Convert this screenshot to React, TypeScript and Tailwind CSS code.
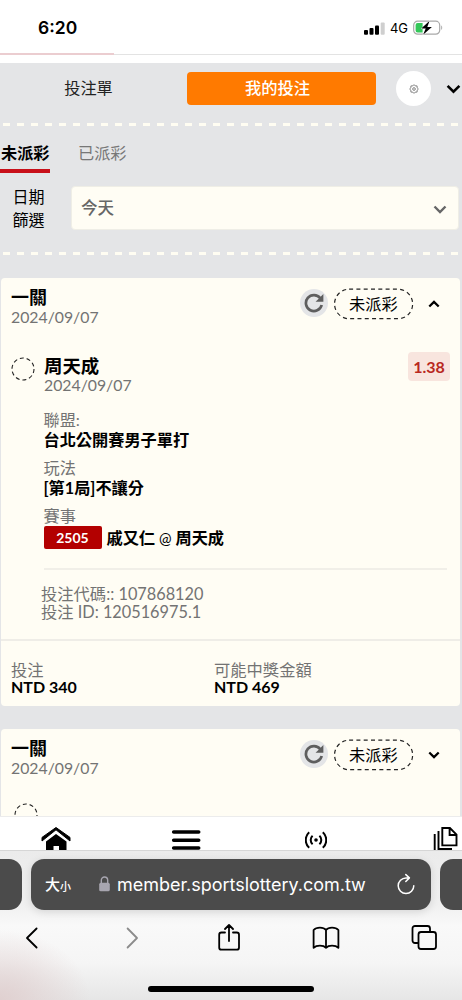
import type { ReactNode } from 'react';
import clsx from 'clsx';

const FIELDS = [
  { label: '聯盟:', value: '台北公開賽男子單打' },
  { label: '玩法', value: '[第1局]不讓分' },
];

function StatusBar() {
  return (
    <div className="h-[53px] shrink-0 flex items-start justify-between pl-[38px] pr-[19px] pt-[17px] font-['Inter','Liberation_Sans',sans-serif]">
      <span className="text-[17.5px] leading-[22px] font-semibold">6:20</span>
      <div className="flex items-center h-[22px] gap-[5px]">
        <svg width="21" height="13" viewBox="0 0 21 13">
          <rect x="0" y="8" width="4" height="4.7" rx="1" />
          <rect x="5.5" y="6" width="4" height="6.7" rx="1" />
          <rect x="11" y="3.5" width="4" height="9.2" rx="1" />
          <rect x="16.7" y="0.5" width="4" height="12.2" rx="1" fill="#cfcfcf" />
        </svg>
        <span className="text-[13px] leading-[22px]">4G</span>
        <svg width="30" height="16" viewBox="0 0 30 16">
          <rect x="0.7" y="1.2" width="26" height="13" rx="4" fill="#fff" stroke="#a9a9a9" strokeWidth="1.2" />
          <path d="M28.2 5.6c1.3.5 1.3 3.9 0 4.4z" fill="#a9a9a9" />
          <path d="M4.6 3h5v9.6h-5a2 2 0 0 1-2-2V5a2 2 0 0 1 2-2z" fill="#34c759" />
          <path d="M16.6.8 8.3 8.6h4.4l-2.6 6.2 8.8-7.9h-4.6z" stroke="#fff" strokeWidth="1" paintOrder="stroke" />
        </svg>
      </div>
    </div>
  );
}

function Dashes() {
  return (
    <div className="h-[2.5px] ml-[3px] mr-[4px] bg-[repeating-linear-gradient(90deg,#fffdf2_0_7px,transparent_7px_14px)]" />
  );
}

function Chevron({ className, up, width = 2.4 }: { className?: string; up?: boolean; width?: number }) {
  return (
    <svg className={className} viewBox="0 0 14 9" fill="none" stroke="currentColor" strokeWidth={width}>
      <path d={up ? 'M1.5 7.5 7 2l5.5 5.5' : 'M1.5 1.5 7 7l5.5-5.5'} />
    </svg>
  );
}

/* Ticket heading: name and date on the left, refresh / status / toggle on the right */
function TicketHead({ open }: { open?: boolean }) {
  return (
    <div className="flex pl-[10px] pr-[20px] pt-[10px]">
      <div className="flex-1">
        <p className="text-[18px] leading-[19px] font-bold">一關</p>
        <p className="text-[15.8px] leading-[19px] h-[20px] text-[#737373]">2024/09/07</p>
      </div>
      <div className="flex items-center h-[32px]">
        <span className="size-[28px] -mt-[3px] rounded-full bg-[#e4e5e7] flex items-center justify-center">
          <svg width="20" height="20" viewBox="0 0 20 20" fill="none">
            <path d="M16.3 5.2A8 8 0 1 0 17.7 12" stroke="#5e5e5e" strokeWidth="2.7" />
            <path d="M19.4 1v7.8h-7.8z" fill="#5e5e5e" />
          </svg>
        </span>
        <svg className="ml-[6px] mr-[-1px]" width="80" height="32" viewBox="0 0 80 32">
          <rect x="0.6" y="1.2" width="78" height="29.5" rx="14.5" fill="none" stroke="#222" strokeWidth="1.2" strokeDasharray="4 3.3" />
          <text x="39.4" y="22" textAnchor="middle" fontSize="16.2">未派彩</text>
        </svg>
        <Chevron up={open} className="w-[12px] h-[8px] ml-[15px] -mt-[1px]" width={2.6} />
      </div>
    </div>
  );
}

function PendingDot({ className }: { className?: string }) {
  return (
    <svg className={clsx('size-[24px] shrink-0', className)} viewBox="0 0 24 24">
      <circle cx="12" cy="12" r="11" fill="none" stroke="#222" strokeWidth="1.1" strokeDasharray="4 2.9" />
    </svg>
  );
}

function Amount({ label, value, className }: { label: string; value: string; className?: string }) {
  return (
    <div className={className}>
      <p className="text-[16.3px] leading-[18px] text-[#737373]">{label}</p>
      <p className="text-[16px] leading-[16px] font-bold">{value}</p>
    </div>
  );
}

function OpenTicket() {
  return (
    <section className="h-[428px] ml-px mr-[2px] rounded-[4px] bg-[#fffdf4] flex flex-col">
      <TicketHead open />
      <div className="flex pl-[10px] pr-[10px] mt-[30px]">
        <PendingDot />
        <div className="ml-[9px] flex-1">
          <p className="text-[18.4px] leading-[19px] font-bold">周天成</p>
          <p className="text-[15.8px] leading-[18px] h-[20px] text-[#737373]">2024/09/07</p>
        </div>
        <span className="w-[42px] h-[29px] -mt-[5px] rounded-[4px] bg-[#f8e5de] text-[#b9291f] text-[16px] leading-[29px] font-bold text-center">
          1.38
        </span>
      </div>
      <div className="pl-[42.5px] mt-[14px]">
        {FIELDS.map((f) => (
          <div key={f.label} className="h-[48px] text-[16.2px]">
            <p className="leading-[20px] text-[#737373]">{f.label}</p>
            <p className="leading-[20px] font-bold">{f.value}</p>
          </div>
        ))}
        <p className="text-[16.2px] leading-[20px] text-[#737373]">賽事</p>
        <div className="flex items-center h-[23px]">
          <span className="w-[58px] h-[23px] rounded-[2px] bg-[#b30000] text-white text-[14px] leading-[23px] font-bold text-center">
            2505
          </span>
          <span className="ml-[5px] text-[16.2px] leading-[23px] font-bold">戚又仁 <span className="text-[15px] font-normal">@</span> 周天成</span>
        </div>
      </div>
      <div className="ml-[43px] mr-[13px] mt-[19px] h-[2px] bg-[#f1efe8]" />
      <div className="ml-[40px] mt-[15px] text-[16.3px] leading-[17.5px] text-[#737373]">
        <p>投注代碼:: 107868120</p>
        <p>投注 ID: 120516975.1</p>
      </div>
      <div className="mt-[19px] h-[2px] bg-[#efede7]" />
      <div className="flex pl-[10px] pt-[20px]">
        <Amount className="w-[203px]" label="投注" value="NTD 340" />
        <Amount label="可能中獎金額" value="NTD 469" />
      </div>
    </section>
  );
}

function SiteNav() {
  return (
    <nav className="h-[34px] shrink-0 bg-white border-t border-[#ececec] overflow-hidden">
      <div className="flex items-start pt-[10px]">
        <svg className="ml-[41px]" width="30" height="25" viewBox="0 0 30 25">
          <path d="M1 14 15 2.8 29 14v-3.6L15 .5 1 10.4z" stroke="#000" />
          <path d="M5 14.5 15 7l10.5 7.5V25H18v-6h-5.5v6H5z" />
        </svg>
        <svg className="ml-[100px] mt-[3px]" width="30" height="21" viewBox="0 0 30 21" stroke="#000" strokeWidth="3.6" strokeLinecap="round">
          <path d="M2.7 2h25M2.7 10.2h25M2.7 18h25" />
        </svg>
        <svg className="ml-[104px] mt-[4px]" width="22" height="18" viewBox="0 0 22 18" fill="none" stroke="#000" strokeWidth="2">
          <circle cx="11" cy="9" r="1.8" fill="#000" stroke="none" />
          <path d="M7.6 4.8a5.6 5.6 0 0 0 0 8.4M14.4 4.8a5.6 5.6 0 0 1 0 8.4M4.2 1.2a10.6 10.6 0 0 0 0 15.6M17.8 1.2a10.6 10.6 0 0 1 0 15.6" />
        </svg>
        <svg className="ml-[106px]" width="26" height="26" viewBox="0 0 26 26" fill="none" stroke="#000" strokeWidth="1.9">
          <path d="M9.3 1h7.6l6.6 6.6v10.8H9.3zM16.6 1.2v6.8h6.8M5.5 4v18h13.5M1.7 7V26" />
        </svg>
      </div>
    </nav>
  );
}

function ToolIcon({ children, className }: { children: ReactNode; className?: string }) {
  return (
    <svg
      className={clsx('size-[28px]', className)}
      viewBox="0 0 28 28"
      fill="none"
      stroke="currentColor"
      strokeWidth="1.8"
      strokeLinecap="round"
      strokeLinejoin="round"
    >
      {children}
    </svg>
  );
}

function BrowserBar() {
  return (
    <footer className="h-[150px] shrink-0 border-t border-[#d6d6d6] flex flex-col overflow-hidden bg-[radial-gradient(ellipse_90px_70px_at_0_100%,#e0d0d0,transparent),linear-gradient(#ebebeb_0%,#f0f0f0_36%,#f9f9f9_50%,#f5f5f5_75%,#e6e6e6_100%)]">
      <div className="flex mt-[8px] h-[51px] gap-[9px] font-['Inter','Noto_Sans_CJK_TC',sans-serif]">
        <div className="w-[22px] shrink-0 rounded-r-[13px] bg-[#4b4b4b]" />
        <div className="w-[400px] shrink-0 rounded-[13px] bg-[#4b4b4b] text-white flex items-center pl-[14px] pr-[16px] shadow-[0_2px_8px_rgba(0,0,0,0.12)]">
          <span className="text-[15px] leading-[20px] font-medium">大</span>
          <span className="text-[11px] leading-[14px] font-medium mt-[4px]">小</span>
          <svg className="ml-[28px] -mt-[2px]" width="11" height="16" viewBox="0 0 11 16">
            <path d="M2.3 8V4.2a3.2 3.2 0 0 1 6.4 0V8" fill="none" stroke="#a8a6b0" strokeWidth="1.4" />
            <rect x="0.2" y="6.7" width="10.6" height="8.6" rx="1.6" fill="#a8a6b0" />
          </svg>
          <span className="ml-[7px] flex-1 text-[18px] leading-[24px] tracking-[-0.02px] whitespace-nowrap">member.sportslottery.com.tw</span>
          <svg className="-mt-[2px]" width="18" height="22" viewBox="0 0 18 22" fill="none" stroke="#fff" strokeWidth="1.5" strokeLinecap="round" strokeLinejoin="round">
            <path d="M12 4.9H9A7.8 7.8 0 1 0 16.8 12.7M8.8 1.6l3.6 3.3-3.6 3.6" />
          </svg>
        </div>
        <div className="w-[40px] shrink-0 rounded-l-[13px] bg-[#4b4b4b]" />
      </div>
      <div className="flex items-center mt-[14px] h-[28px]">
        <ToolIcon className="ml-[18px]"><path d="M18.6 4.5 9 14l9.6 9.5" /></ToolIcon>
        <ToolIcon className="ml-[72px] text-[#8b8b8b]"><path d="M9.6 4.5 19 14l-9.4 9.5" /></ToolIcon>
        <ToolIcon className="ml-[69px]">
          <path d="M10 8.5H6.5a2.3 2.3 0 0 0-2.3 2.3v12.6a2.3 2.3 0 0 0 2.3 2.3h15.2a2.3 2.3 0 0 0 2.3-2.3V10.8a2.3 2.3 0 0 0-2.3-2.3H18M14 17V1.2M10 5l4-4 4 4" />
        </ToolIcon>
        <ToolIcon className="ml-[69px]">
          <path d="M14 6C11.5 2.8 4.5 2.8 1.6 6V23.8C4.5 21 11.5 21 14 23.8c2.5-2.8 9.5-2.8 12.4 0V6C23.5 2.8 16.5 2.8 14 6zV23.8" />
        </ToolIcon>
        <ToolIcon className="ml-[70px]">
          <path d="M7.5 19H5a2.500 2.500 0 0 1-2.500-2.500V4.500A2.500 2.500 0 0 1 5 2h12.500A2.500 2.500 0 0 1 20 4.500V7.500" />
          <rect x="8.500" y="8" width="17.500" height="17" rx="2.500" />
        </ToolIcon>
      </div>
      <div className="mx-auto mt-[34px] w-[166px] h-[6px] rounded-full bg-black" />
    </footer>
  );
}

export default function App() {
  return (
    <div lang="zh-Hant" className="w-[462px] h-[1000px] overflow-hidden flex flex-col bg-white text-black font-['Lato','Noto_Sans_CJK_TC',sans-serif]">
      <StatusBar />
      <div className="h-[10px] shrink-0">
        <div className="h-[2px] border-b border-[#e3e3e3]">
          <div className="w-[114px] h-[2px] bg-[#ebcdd0]" />
        </div>
      </div>

      <main className="flex-1 min-h-0 overflow-hidden bg-[#e4e5e7]">
        <div className="flex items-center h-[51px]">
          <span className="w-[177px] -mt-px text-center text-[16.2px] text-[#222]">投注單</span>
          <button className="ml-[10px] w-[189px] h-[33px] pr-[8px] rounded-[4px] bg-[#ff7a00] text-white text-[16.3px] font-medium">我的投注</button>
          <span className="ml-[20px] size-[35px] rounded-full bg-white flex items-center justify-center">
            <svg width="10" height="10" viewBox="0 0 24 24" fill="none" stroke="#666" strokeWidth="1.9">
              <circle cx="12" cy="12" r="3.2" />
              <path d="M12 1.5 14.8 4.5 19.4 4.6 19.5 9.2 22.5 12 19.5 14.8 19.4 19.4 14.8 19.5 12 22.5 9.2 19.5 4.6 19.4 4.5 14.8 1.5 12 4.5 9.2 4.6 4.6 9.2 4.5z" />
            </svg>
          </span>
          <Chevron className="ml-[15px] w-[15px] h-[10px] shrink-0" />
        </div>
        <div className="mt-[9px] h-[3px]"><Dashes /></div>

        <div className="flex mt-[14px] h-[33px] text-[16.2px] leading-[26px]">
          <span className="w-[50px] pl-px border-b-[4px] border-[#c8101a] font-bold">未派彩</span>
          <span className="ml-[28px] text-[#777]">已派彩</span>
        </div>

        <div className="flex mt-[13px]">
          <p className="w-[71px] pl-[12.5px] -mt-px text-[16px] leading-[23px]">日期<br />篩選</p>
          <div className="w-[388px] h-[44px] rounded-[4px] bg-[#fffdf4] border border-[#efeee6] flex items-center justify-between pl-[9px] pr-[11px] text-[#666]">
            <span className="text-[16.5px] font-medium">今天</span>
            <Chevron className="w-[14px] h-[9px] mt-[2px]" />
          </div>
        </div>
        <div className="mt-[21px] mb-[23px] h-[3px]"><Dashes /></div>

        <OpenTicket />

        <section className="mt-[23px] ml-px mr-[2px] h-[120px] rounded-t-[4px] bg-[#fffdf4]">
          <TicketHead />
          <PendingDot className="ml-[13px] mt-[25px]" />
        </section>
      </main>

      <SiteNav />
      <BrowserBar />
    </div>
  );
}
